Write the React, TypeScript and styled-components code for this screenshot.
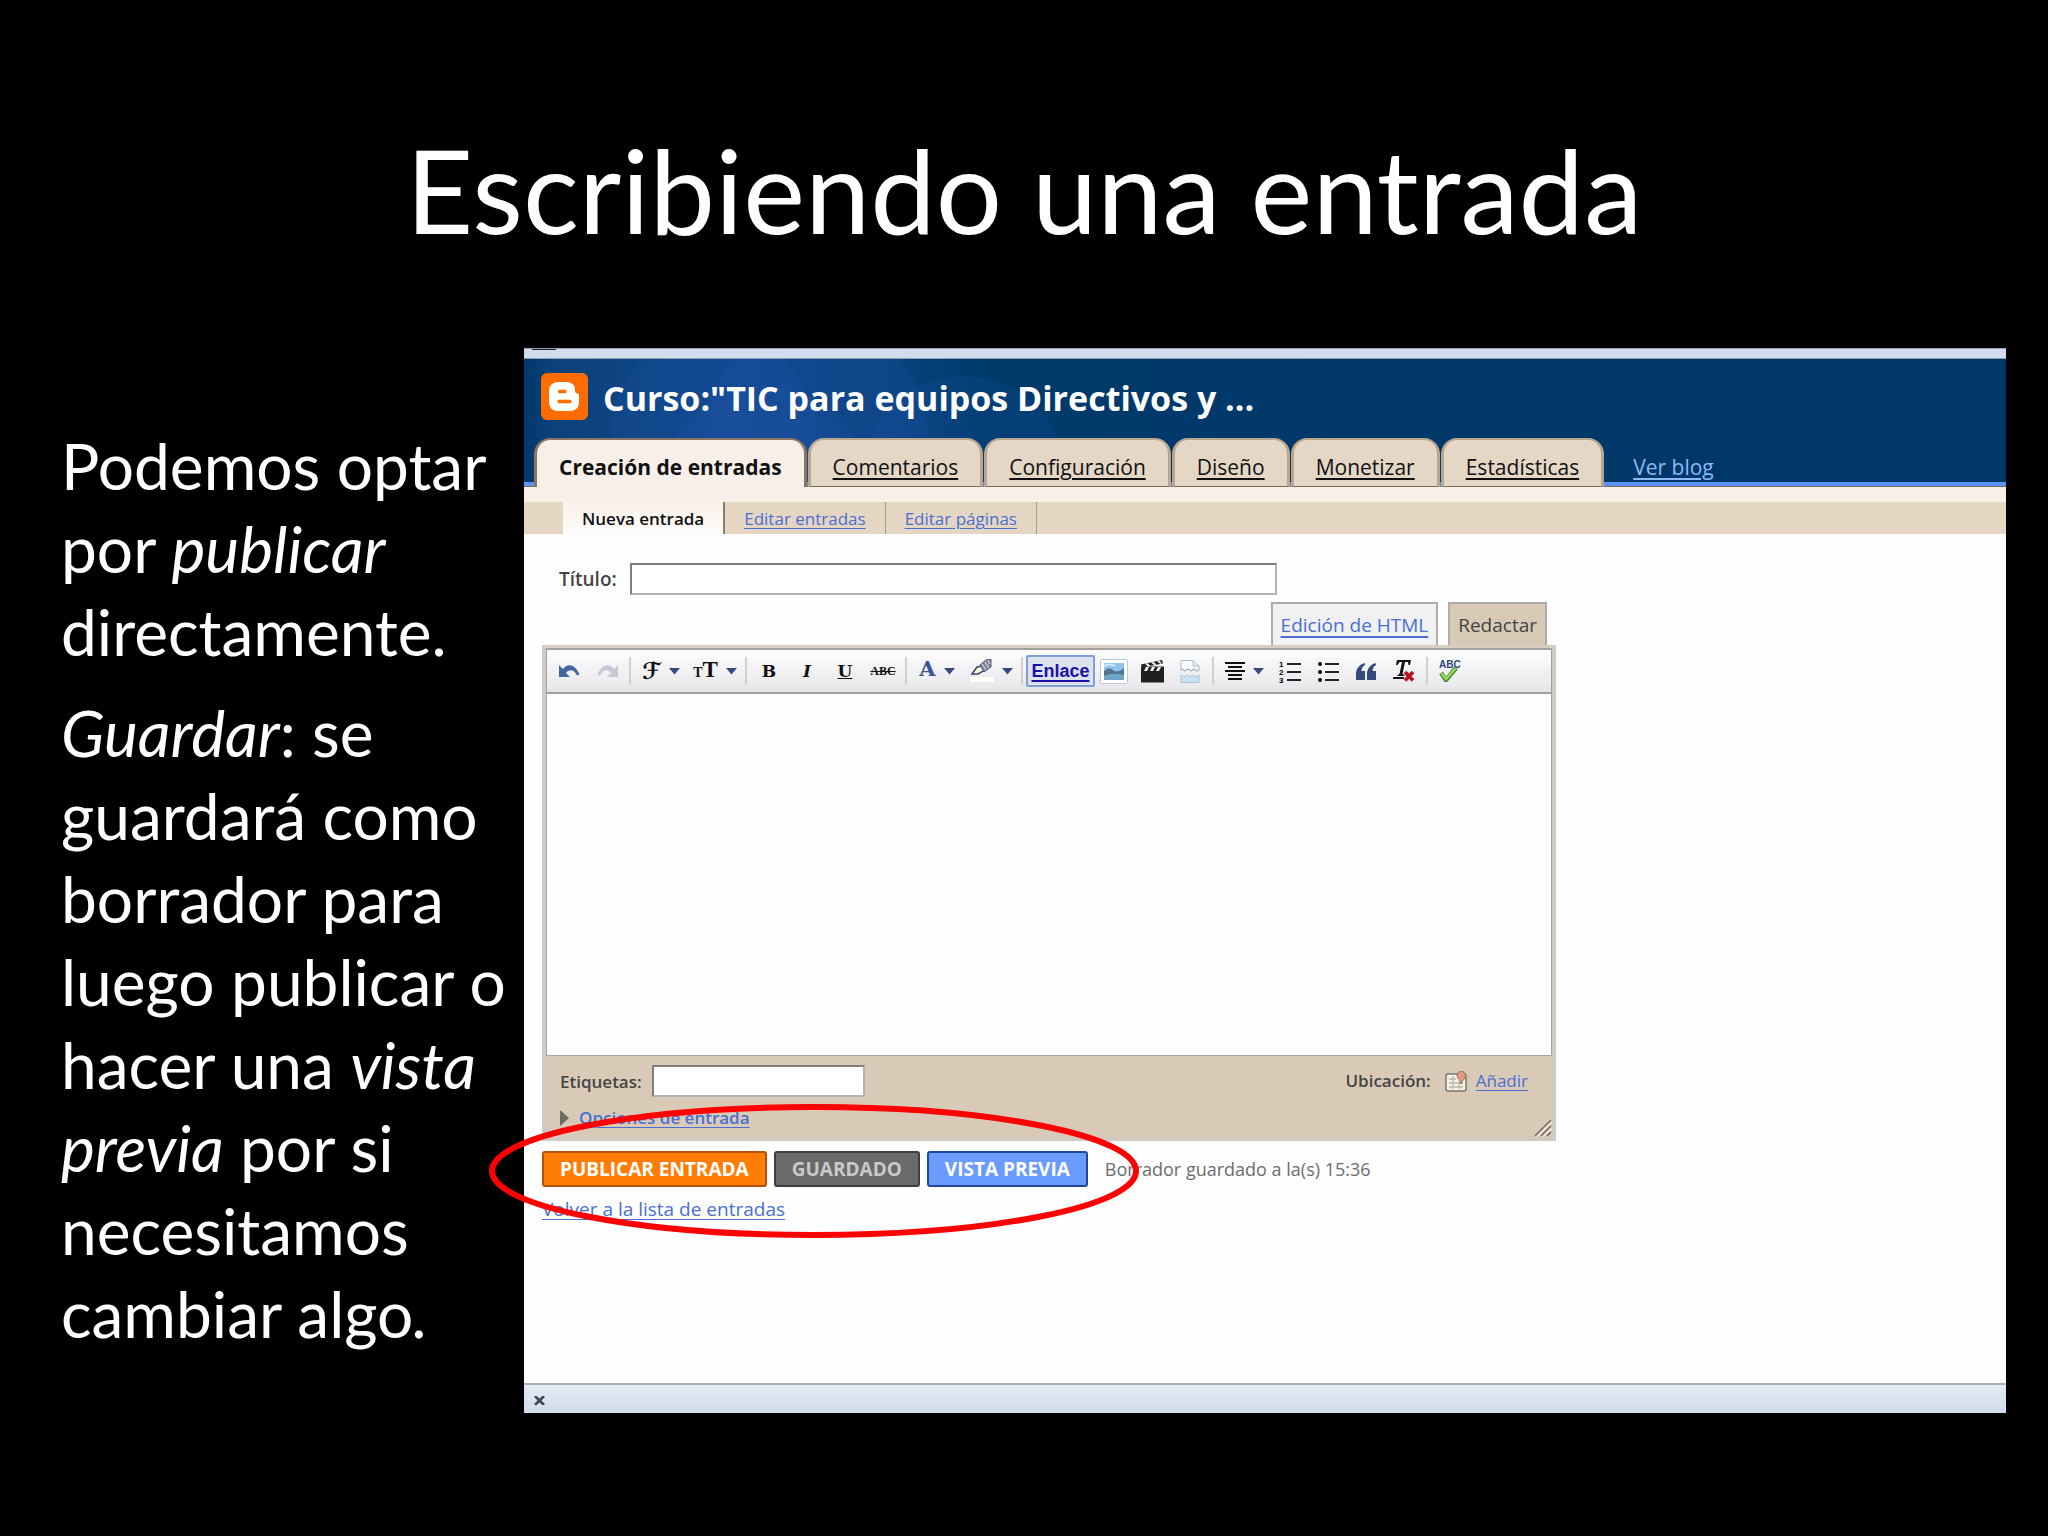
import React from "react";
import styled, { createGlobalStyle, css } from "styled-components";

const GlobalStyle = createGlobalStyle`
  *, *::before, *::after { box-sizing: border-box; }
  body { margin: 0; background: #000; }
  button, input, textarea { font: inherit; color: inherit; border-radius: 0; }
  h1, h2, p { margin: 0; font-weight: 400; }
`;

const ui = `"Open Sans", "Noto Sans", sans-serif`;
const link = "#4a6fd0";

const Slide = styled.div`
  display: flex;
  flex-direction: column;
  min-height: 100vh;
  padding: 119px 0 123px;
  background: #000;
  color: #fff;
  font-family: Lato, "Open Sans", sans-serif;
`;

const SlideTitle = styled.h1`
  font-size: 117px;
  line-height: 140px;
  text-align: center;
  margin-bottom: 89px;
`;

const Columns = styled.main`
  position: relative;
  flex: 1;
  display: flex;
  padding: 0 42px 0 61px;
`;

const Notes = styled.section`
  flex: 0 0 463px;
  padding-top: 76px;
  font-size: 64px;
  line-height: 83px;
  white-space: nowrap;
  p + p { margin-top: 18px; }
`;

const Browser = styled.section`
  flex: 1;
  min-width: 0;
  display: flex;
  flex-direction: column;
  background: #fefefe;
  color: #444;
  font-family: ${ui};
`;

const ChromeStrip = styled.div`
  height: 11px;
  padding-left: 8px;
  background: #d3dcec;
  border-top: 1px solid #8fa3b5;
  border-bottom: 1px solid #8e9db0;
  &::before { content: ""; display: block; width: 24px; height: 1px; background: #1c1c2c; }
`;

const BlogHeader = styled.header`
  background:
    radial-gradient(circle 103px at 189px 75px, rgba(36, 88, 180, 0.16) 99%, transparent 100%),
    radial-gradient(circle 112px at 292px 75px, rgba(36, 88, 180, 0.16) 99%, transparent 100%),
    radial-gradient(circle 103px at 240px 130px, rgba(36, 88, 180, 0.16) 99%, transparent 100%),
    radial-gradient(circle 103px at 440px 120px, rgba(36, 88, 180, 0.16) 99%, transparent 100%),
    linear-gradient(90deg, #02386a 0, #0b427c 30px, #10468a 200px, #0b4280 360px, #003a6b 460px, #003668 100%);
`;

const BlogTitle = styled.div`
  height: 79px;
  padding: 14px 17px 0;
  display: flex;
  align-items: flex-start;
  gap: 15px;
  color: #fff;
  h2 {
    font-size: 34px;
    line-height: 50px;
    font-weight: 700;
  }
`;

const Tabs = styled.nav`
  display: flex;
  align-items: stretch;
  gap: 1px;
  height: 49px;
  padding-left: 10px;
  background: linear-gradient(#5e93f6, #5e93f6) 0 44px / 100% 4px no-repeat;
  box-shadow: inset 0 -1px #7b6a5c;
`;

const Tab = styled.a<{ $active?: boolean }>`
  padding: 0 22px;
  border: 3px solid ${(p) => (p.$active ? "#8a7462" : "#b9a68f")};
  border-top-width: 2px;
  border-bottom: ${(p) => (p.$active ? "0" : "1px solid #7b6a5c")};
  border-radius: 16px 16px 0 0;
  background: ${(p) => (p.$active ? "#f7efe8" : "#e5d7c5")};
  color: #111;
  font-size: 21px;
  line-height: 54px;
  font-weight: ${(p) => (p.$active ? 700 : 400)};
  text-decoration: ${(p) => (p.$active ? "none" : "underline")};
  text-underline-offset: 3px;
  text-decoration-thickness: 2px;
`;

const ViewBlog = styled.a`
  margin-left: 28px;
  color: #8db9f5;
  font-size: 21px;
  line-height: 58px;
  text-underline-offset: 3px;
`;

const SubTabs = styled.nav`
  display: flex;
  height: 47px;
  padding: 0 0 0 39px;
  border-top: 15px solid #f7efe8;
  background: #e4d6c3;
`;

const SubTab = styled.a<{ $active?: boolean }>`
  padding: 2px 19px 0;
  border-right: ${(p) => (p.$active ? "2px solid #857c72" : "1px solid #a39c94")};
  background: ${(p) => (p.$active ? "linear-gradient(#f9f1ea, #fefcfb)" : "none")};
  color: ${(p) => (p.$active ? "#111" : link)};
  font-size: 17px;
  line-height: 30px;
  font-weight: ${(p) => (p.$active ? 600 : 400)};
  text-decoration: ${(p) => (p.$active ? "none" : "underline")};
  text-underline-offset: 3px;
`;

const Workspace = styled.form`
  flex: 1;
  width: 1032px;
  padding: 29px 0 0 18px;
`;

const field = css`
  height: 32px;
  padding: 0 6px;
  background: #fff;
  border: 2px solid #b3b3b3;
  border-top-color: #7f7f7f;
  border-left-color: #7f7f7f;
  font-size: 18px;
`;

const TitleRow = styled.div`
  display: flex;
  align-items: center;
  padding-left: 17px;
  label { width: 71px; font-size: 19px; font-weight: 600; line-height: 32px; }
  input { ${field} width: 647px; }
`;

const Modes = styled.div`
  display: flex;
  justify-content: flex-end;
  gap: 10px;
  padding: 7px 9px 0 0;
`;

const Mode = styled.a<{ $active?: boolean }>`
  height: 43px;
  padding: 0 8px;
  border: 2px solid #aeacac;
  border-bottom: 0;
  background: ${(p) => (p.$active ? "#d9cab8" : "#f1f0f3")};
  color: ${(p) => (p.$active ? "#444" : link)};
  font-size: 19px;
  line-height: 43px;
  font-weight: 500;
  text-decoration: ${(p) => (p.$active ? "none" : "underline")};
  text-underline-offset: 4px;
  text-decoration-thickness: 2px;
`;

const Editor = styled.div`
  border: 4px solid #d0cac3;
  border-top: 3px solid #d9cdbf;
  background: #d9cab8;
`;

const Toolbar = styled.div`
  display: flex;
  align-items: center;
  height: 46px;
  padding-left: 3px;
  border: 1px solid #a29f9d;
  border-top-width: 2px;
  border-bottom-width: 2px;
  background: linear-gradient(#fdfdfe, #e6e5e9);
`;

const Tool = styled.button<{ $wide?: boolean }>`
  width: ${(p) => (p.$wide ? 54 : 38)}px;
  height: 32px;
  padding: 0;
  border: 0;
  background: none;
  display: flex;
  align-items: center;
  justify-content: center;
  gap: ${(p) => (p.$wide ? 8 : 0)}px;
  color: #111;
  font-family: "DejaVu Serif", serif;
  font-size: 17px;
  line-height: 24px;
  font-weight: 700;
  svg { display: block; flex: none; }
`;

const Strike = styled.s`font-family: "Liberation Serif", serif; font-size: 12px; font-weight: 700;`;
const Script = styled.span`font-family: "DejaVu Sans", "DejaVu Serif", serif; font-size: 23px; font-weight: 700;`;
const Sizes = styled.span`
  font-family: "Liberation Serif", serif;
  font-size: 23px;
  small { font-size: 14px; }
`;
const Colour = styled.span`font-family: "DejaVu Serif", serif; font-size: 21px; color: #3a5691; padding-bottom: 5px;`;

const Separator = styled.span`
  width: 8px;
  height: 28px;
  background: linear-gradient(#cfcfd4, #cfcfd4) 3px 0 / 2px 100% no-repeat;
`;

const LinkTool = styled.button`
  width: 69px;
  height: 32px;
  padding: 0;
  border: 2px solid #7ba0d8;
  border-radius: 2px;
  background: #dde2ef;
  color: #1a12a8;
  font-family: "Liberation Sans", Arial, sans-serif;
  font-size: 18px;
  line-height: 24px;
  font-weight: 700;
  text-decoration: underline;
  text-decoration-thickness: 2px;
  text-underline-offset: 3px;
`;

const PostBody = styled.textarea`
  display: block;
  width: 100%;
  height: 362px;
  border: 1px solid #a9a5a0;
  border-top: 0;
  background: #fefefe;
  resize: none;
`;

const Options = styled.div`
  position: relative;
  display: flex;
  justify-content: space-between;
  height: 81px;
  padding: 9px 24px 0 14px;
  font-size: 17px;
  line-height: 34px;
  font-weight: 600;
`;

const Labels = styled.div`
  display: flex;
  label { width: 92px; }
  input { ${field} width: 213px; }
`;

const TextLink = styled.a`
  color: ${link};
  text-underline-offset: 3px;
`;

const MoreOptions = styled.div`
  display: flex;
  align-items: center;
  gap: 10px;
  line-height: 38px;
`;

const Place = styled.div`
  display: flex;
  align-items: center;
  height: 32px;
  gap: 8px;
  font-size: 17px;
  svg { margin-left: 6px; }
  a { font-weight: 400; }
`;

const Grip = styled.svg`
  position: absolute;
  right: 0;
  bottom: 0;
`;

const Actions = styled.div`
  display: flex;
  align-items: center;
  gap: 7px;
  margin-top: 10px;
  span { margin-left: 10px; font-size: 18px; line-height: 36px; color: #6c6c6c; }
`;

const Action = styled.button<{ $bg: string; $edge: string; $ink?: string }>`
  height: 36px;
  padding: 0 16px;
  border: 2px solid ${(p) => p.$edge};
  border-radius: 3px;
  background: ${(p) => p.$bg};
  color: ${(p) => p.$ink || "#fff"};
  font-size: 19px;
  line-height: 30px;
  font-weight: 700;
`;

const BackLink = styled.p`
  font-size: 19px;
  line-height: 44px;
`;

const StatusBar = styled.footer`
  height: 30px;
  padding: 11px 10px;
  border-top: 2px solid #a9aeb8;
  background: linear-gradient(#e6ebf5, #d1dbed);
  svg { display: block; }
`;

const CloseFind = styled.button`
  display: block;
  padding: 0;
  border: 0;
  background: none;
`;

const Highlight = styled.svg`
  position: absolute;
  left: 489px;
  top: 756px;
  pointer-events: none;
`;

const Caret = () => (
  <svg width="11" height="7" viewBox="0 0 11 7"><path d="M0 0h11L5.500 6.500z" fill="#35497f" /></svg>
);

const BloggerLogo = () => (
  <svg width="47" height="47" viewBox="0 0 47 47">
    <rect width="47" height="47" rx="6" fill="#ff6c00" />
    <path d="M18 9h7c7 0 9 4 9 8 0 2 0 2.500 1.500 3s2.500 1 2.500 2.500v6.500c0 6-4 9-9 9H17c-6 0-9-4-9-9V18c0-6 4-9 10-9z" fill="#fff" />
    <path d="M18.500 18.500h5.500M18 28.500h11" stroke="#ff6c00" strokeWidth="3.400" strokeLinecap="round" />
  </svg>
);

const Undo = ({ faded }: { faded?: boolean }) => (
  <svg width="21" height="14" viewBox="0 0 21 14">
    <path
      transform={faded ? "matrix(-1 0 0 1 21 0)" : undefined}
      d="M0 1v12h11l-4-4c3-4 8-4 11 2.500l2.500-1C17 1 9-2 3.800 5z"
      fill={faded ? "#c5cad6" : "#44669f"}
    />
  </svg>
);

const Highlighter = () => (
  <svg width="24" height="24" viewBox="0 0 24 24">
    <path d="M0 18h24v5H0z" fill="#fffffa" />
    <path d="M2 15l5-7 5-1 3 4-7 4z" fill="#f8f8dc" stroke="#2e4a6c" strokeWidth="1.500" />
    <path d="M10 6l6-5 5-1v8l-7 5z" fill="#85899a" stroke="#545b6b" strokeWidth="1" />
    <path d="M12 5l4 6M15 3l4 6M18 1l2 4" stroke="#dfe2e8" strokeWidth="1" />
  </svg>
);

const Photo = () => (
  <svg width="28" height="25" viewBox="0 0 28 25">
    <rect x=".5" y=".5" width="27" height="24" rx="1" fill="#fff" stroke="#b9c6da" />
    <rect x="4" y="4" width="20" height="17" fill="#8fc4ec" />
    <path d="M4 12q5-5 9-1t11-2v12H4z" fill="#52748c" />
    <path d="M4 17q8-4 20-1v5H4z" fill="#6ea5c9" />
    <path d="M4 7q6-3 11 0" stroke="#d7ecfa" strokeWidth="2" fill="none" />
  </svg>
);

const Clapper = () => (
  <svg width="23" height="23" viewBox="0 0 23 23">
    <path d="M0 11h23v11.500H0z" fill="#1f1f1f" />
    <path d="M0 6.500h23V11H0z" fill="#222" />
    <path d="M3 11l2-4h3l-2 4zM9 11l2-4h3l-2 4zM15 11l2-4h3l-2 4z" fill="#f5f5f5" />
    <path d="M0 4.500L21 0l1 3.500L1 7.500z" fill="#222" />
    <path d="M4 3.700l3 2.700 2.500-.5-3-2.700zM10 2.400l3 2.700 2.500-.5-3-2.700zM16 1.100l3 2.700 2-.5-3-2.700z" fill="#f5f5f5" />
  </svg>
);

const PageBreak = () => (
  <svg width="20" height="23" viewBox="0 0 20 23">
    <path d="M1 8V.5h12L19 6v3" fill="#f8fafc" stroke="#a9bccb" />
    <path d="M13 .5V6h6" fill="#e3ebf2" stroke="#a9bccb" />
    <path d="M1 15v7.500h18V15l-3 2-3-2-3 2-3-2-3 2z" fill="#c9e3f5" stroke="#a9c3d6" />
    <path d="M0 10.500l2-2 3 3 3-3 3 3 3-3 3 3 3-3" fill="none" stroke="#5f7f98" strokeDasharray="3 1" />
  </svg>
);

const Align = () => (
  <svg width="20" height="18" viewBox="0 0 20 18">
    <path d="M0 1h20M3 5h14M0 9h20M3 13h14M3 17h14" stroke="#111" strokeWidth="2" />
  </svg>
);

const NumberList = styled.svg`font: 700 8px "Liberation Sans", sans-serif;`;

const Ordered = () => (
  <NumberList width="22" height="23" viewBox="0 0 22 23">
    <path d="M8 4h14M8 12h14M8 20h14" stroke="#222" strokeWidth="2" />
    <text x="0" y="7">1</text><text x="0" y="15">2</text><text x="0" y="23">3</text>
  </NumberList>
);

const Bullets = () => (
  <svg width="21" height="21" viewBox="0 0 21 21">
    <path d="M7 3h14M7 11h14M7 19h14" stroke="#222" strokeWidth="2" />
    <circle cx="2" cy="3" r="2" /><circle cx="2" cy="11" r="2" /><circle cx="2" cy="19" r="2" />
  </svg>
);

const Quote = () => (
  <svg width="20" height="17" viewBox="0 0 20 17">
    <path d="M8.500 0C3 2 0 6 0 11v6h9V8H5.500C5.500 5 7 3 9 2zM19.500 0C14 2 11 6 11 11v6h9V8h-3.500c0-3 1.500-5 3.500-6z" fill="#35497f" />
  </svg>
);

const ClearFormat = () => (
  <svg width="22" height="22" viewBox="0 0 22 22">
    <path d="M4 0h14l-1 5h-1.500L15 2h-3L9.500 14l2 1v1h-7v-1l2-1L9 2H6.500L4.500 5H3z" fill="#111" />
    <path d="M0 18h11" stroke="#111" strokeWidth="2" />
    <path d="M12 12l8 8.500M20 12l-8 8.500" stroke="#b8101c" strokeWidth="3.500" />
  </svg>
);

const SpellMark = styled.svg`font: 700 10px "Liberation Sans", sans-serif;`;

const Spelling = () => (
  <SpellMark width="22" height="22" viewBox="0 0 22 22">
    <text x="0" y="8" fill="#2a4a78">ABC</text>
    <path d="M2 13l5 7L17 8" fill="none" stroke="#4d8a35" strokeWidth="4.500" />
    <path d="M2.500 13.500l4.500 5.500L16.500 8.500" fill="none" stroke="#94dc60" strokeWidth="2.400" />
  </SpellMark>
);

const MapPin = () => (
  <svg width="23" height="21" viewBox="0 0 23 21">
    <rect x="1" y="3" width="20" height="17" rx="2" fill="#f3f2e6" stroke="#7b776c" strokeWidth="1.500" />
    <path d="M4 8h7M4 12h14M4 16h14M8 5v13M14 10v8" stroke="#b8b9a6" strokeWidth="1.300" />
    <path d="M16 13c0-4-4-5-4-8.500a4 4 0 0 1 8.500 0C20.500 8 17 9 16 13z" fill="#df9a80" stroke="#a06a58" />
  </svg>
);

export default function App() {
  return (
    <>
      <GlobalStyle />
      <Slide>
        <SlideTitle>Escribiendo una entrada</SlideTitle>
        <Columns>
          <Notes>
            <p>Podemos optar<br />por <em>publicar</em><br />directamente.</p>
            <p>
              <em>Guardar</em>: se<br />guardará como<br />borrador para<br />luego publicar o<br />
              hacer una <em>vista</em><br /><em>previa</em> por si<br />necesitamos<br />cambiar algo<em>.</em>
            </p>
          </Notes>
          <Browser>
            <ChromeStrip />
            <BlogHeader>
              <BlogTitle>
                <BloggerLogo />
                <h2>Curso:"TIC para equipos Directivos y ...</h2>
              </BlogTitle>
              <Tabs>
                <Tab href="#crear" $active>Creación de entradas</Tab>
                <Tab href="#comentarios">Comentarios</Tab>
                <Tab href="#configuracion">Configuración</Tab>
                <Tab href="#diseno">Diseño</Tab>
                <Tab href="#monetizar">Monetizar</Tab>
                <Tab href="#estadisticas">Estadísticas</Tab>
                <ViewBlog href="#blog">Ver blog</ViewBlog>
              </Tabs>
            </BlogHeader>
            <SubTabs>
              <SubTab href="#nueva" $active>Nueva entrada</SubTab>
              <SubTab href="#entradas">Editar entradas</SubTab>
              <SubTab href="#paginas">Editar páginas</SubTab>
            </SubTabs>
            <Workspace onSubmit={(e) => e.preventDefault()}>
              <TitleRow>
                <label htmlFor="titulo">Título:</label>
                <input id="titulo" type="text" />
              </TitleRow>
              <Modes>
                <Mode href="#html">Edición de HTML</Mode>
                <Mode href="#redactar" $active>Redactar</Mode>
              </Modes>
              <Editor>
                <Toolbar role="toolbar">
                  <Tool type="button" aria-label="Deshacer"><Undo /></Tool>
                  <Tool type="button" aria-label="Rehacer"><Undo faded /></Tool>
                  <Separator />
                  <Tool type="button" $wide aria-label="Fuente"><Script>ℱ</Script><Caret /></Tool>
                  <Tool type="button" $wide aria-label="Tamaño"><Sizes><small>T</small>T</Sizes><Caret /></Tool>
                  <Separator />
                  <Tool type="button" aria-label="Negrita">B</Tool>
                  <Tool type="button" aria-label="Cursiva"><i>I</i></Tool>
                  <Tool type="button" aria-label="Subrayado"><u>U</u></Tool>
                  <Tool type="button" aria-label="Tachado"><Strike>ABC</Strike></Tool>
                  <Separator />
                  <Tool type="button" $wide aria-label="Color del texto"><Colour>A</Colour><Caret /></Tool>
                  <Tool type="button" $wide aria-label="Color de fondo"><Highlighter /><Caret /></Tool>
                  <Separator />
                  <LinkTool type="button">Enlace</LinkTool>
                  <Tool type="button" aria-label="Imagen"><Photo /></Tool>
                  <Tool type="button" aria-label="Vídeo"><Clapper /></Tool>
                  <Tool type="button" aria-label="Salto"><PageBreak /></Tool>
                  <Separator />
                  <Tool type="button" $wide aria-label="Alinear"><Align /><Caret /></Tool>
                  <Tool type="button" aria-label="Lista numerada"><Ordered /></Tool>
                  <Tool type="button" aria-label="Lista"><Bullets /></Tool>
                  <Tool type="button" aria-label="Cita"><Quote /></Tool>
                  <Tool type="button" aria-label="Quitar formato"><ClearFormat /></Tool>
                  <Separator />
                  <Tool type="button" aria-label="Ortografía"><Spelling /></Tool>
                </Toolbar>
                <PostBody aria-label="Entrada" />
                <Options>
                  <div>
                    <Labels>
                      <label htmlFor="etiquetas">Etiquetas:</label>
                      <input id="etiquetas" type="text" />
                    </Labels>
                    <MoreOptions>
                      <svg width="9" height="16" viewBox="0 0 9 16"><path d="M0 0l9 8-9 8z" fill="#6d6a60" /></svg>
                      <TextLink href="#opciones">Opciones de entrada</TextLink>
                    </MoreOptions>
                  </div>
                  <Place>
                    Ubicación:
                    <MapPin />
                    <TextLink href="#lugar">Añadir</TextLink>
                  </Place>
                  <Grip width="18" height="18" viewBox="0 0 18 18">
                    <path d="M1 17L17 1M7 17L17 7M13 17l4-4" stroke="#6f675c" strokeWidth="1.500" />
                    <path d="M3 17.500L17.500 3M9 17.500L17.500 9" stroke="#f6efe5" strokeWidth="1.200" />
                  </Grip>
                </Options>
              </Editor>
              <Actions>
                <Action type="submit" $bg="#ff7d05" $edge="#b4520a">PUBLICAR ENTRADA</Action>
                <Action type="button" $bg="#6a6a6a" $edge="#3f3f3f" $ink="#c9c9c9">GUARDADO</Action>
                <Action type="button" $bg="#6a9bff" $edge="#1f4a9c">VISTA PREVIA</Action>
                <span>Borrador guardado a la(s) 15:36</span>
              </Actions>
              <BackLink><TextLink href="#lista">Volver a la lista de entradas</TextLink></BackLink>
            </Workspace>
            <StatusBar>
              <CloseFind type="button" aria-label="Cerrar">
                <svg width="11" height="9" viewBox="0 0 11 9"><path d="M1 0l9 9M10 0L1 9" stroke="#3c4656" strokeWidth="2.600" /></svg>
              </CloseFind>
            </StatusBar>
          </Browser>
          <Highlight width="651" height="134" viewBox="0 0 651 134">
            <ellipse cx="325" cy="67" rx="322" ry="64" fill="none" stroke="#fe0000" strokeWidth="6" />
          </Highlight>
        </Columns>
      </Slide>
    </>
  );
}
